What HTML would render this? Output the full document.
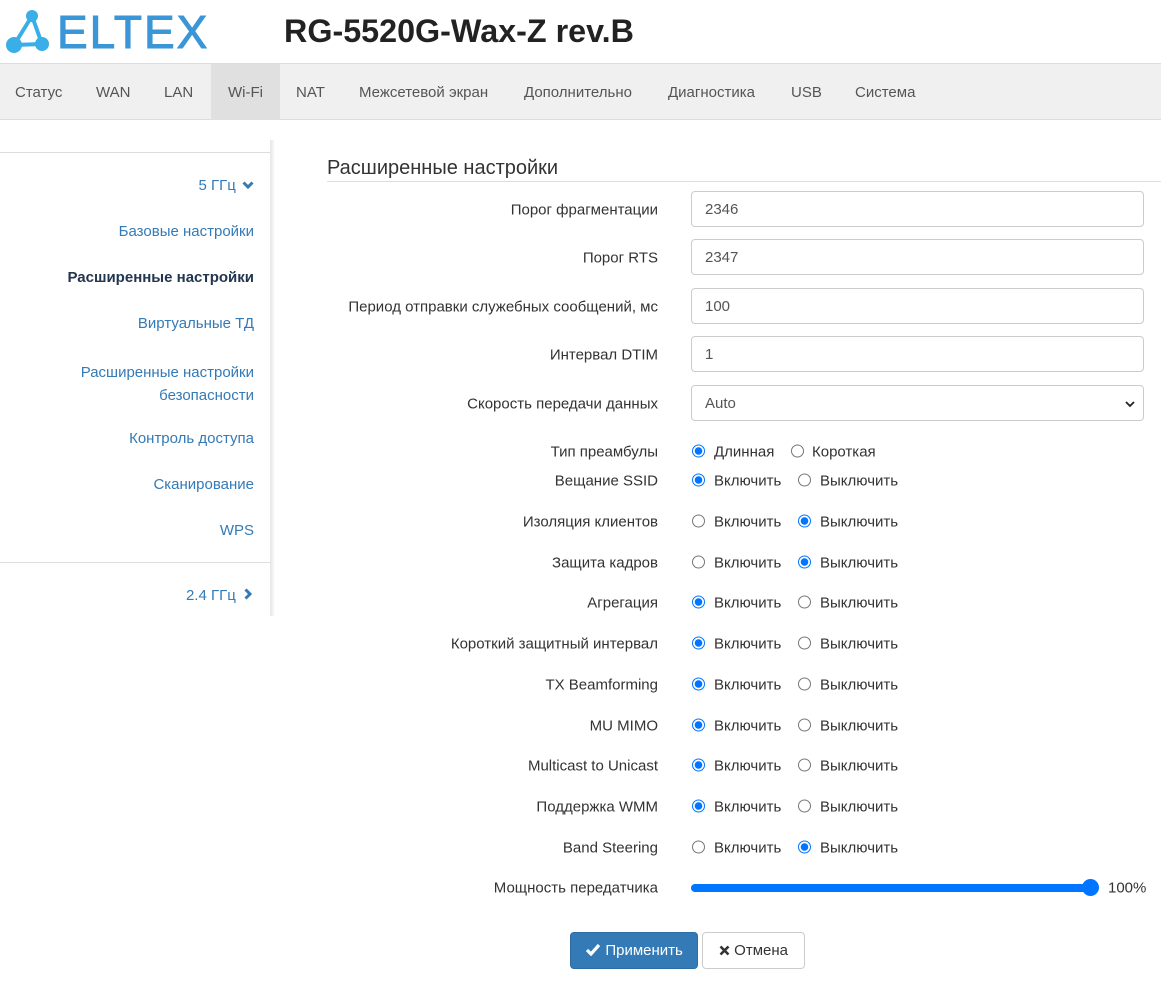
<!DOCTYPE html>
<html><head><meta charset="utf-8"><style>
*{box-sizing:border-box;margin:0;padding:0}
body{width:1161px;height:984px;background:#fff;font-family:"Liberation Sans",sans-serif;font-size:15px;color:#333;position:relative;overflow:hidden}
.a{position:absolute;white-space:nowrap}
.nav{position:absolute;left:0;top:63px;width:1161px;height:57px;background:#f0f0f0;border-top:1px solid #ddd;border-bottom:1px solid #ddd}
.nav span{position:absolute;top:1px;height:55px;line-height:55px;color:#555;font-size:15px}
.side{position:absolute;right:907px;color:#337ab7;font-size:15px;text-align:right}
.lbl{position:absolute;right:503px;font-size:15px;color:#333;white-space:nowrap;transform:translateY(-45%)}
.inp{position:absolute;left:691px;width:453px;height:36px;border:1px solid #ccc;border-radius:4px;padding-left:13px;line-height:36px;font-size:15px;color:#555}
.r{position:absolute;width:13px;height:13px;border-radius:50%;border:1px solid #767676;transform:translateY(-50%)}
.r.on{border:1px solid #0075ff;background:radial-gradient(circle,#0075ff 0 3.5px,#fff 4px)}
.rt{position:absolute;font-size:15px;color:#333;transform:translateY(-45%);white-space:nowrap}
</style></head><body>
<svg class="a" style="left:4px;top:8px" width="50" height="46" viewBox="0 0 50 46">
<g stroke="#3aaee6" stroke-width="4" fill="none"><line x1="28" y1="8" x2="10" y2="37"/><line x1="28" y1="8" x2="38" y2="36"/><line x1="10" y1="37" x2="38" y2="36"/></g>
<circle cx="28" cy="8" r="6" fill="#3aaee6"/><circle cx="10" cy="37" r="8" fill="#3aaee6"/><circle cx="38" cy="36" r="7" fill="#3aaee6"/><circle cx="24" cy="26" r="3" fill="#fff"/>
</svg>
<div class="a" style="left:57px;top:5px;font-size:46px;color:#3a96d6;letter-spacing:2px;-webkit-text-stroke:1px #3a96d6">ELTEX</div>
<div class="a" style="left:284px;top:13px;font-size:32.3px;font-weight:bold;color:#222">RG-5520G-Wax-Z rev.B</div>
<div class="nav">
<span style="left:15px">Статус</span><span style="left:96px">WAN</span><span style="left:164px">LAN</span>
<span style="left:211px;width:69px;background:#e0e0e0;text-align:center;top:0;height:56px;line-height:57px">Wi-Fi</span>
<span style="left:296px">NAT</span><span style="left:359px">Межсетевой экран</span><span style="left:524px">Дополнительно</span>
<span style="left:668px">Диагностика</span><span style="left:791px">USB</span><span style="left:855px">Система</span>
</div>
<div class="a" style="left:0;top:152px;width:271px;border-top:1px solid #ddd"></div>
<div class="a" style="left:270px;top:140px;width:4px;height:476px;background:linear-gradient(90deg,#e6e6e6,#f6f6f6)"></div>
<div class="a" style="left:0;top:562px;width:271px;border-top:1px solid #ddd"></div>
<div class="side" style="top:177px">5 ГГц <svg width="12" height="10" viewBox="0 0 12 10" style="margin-left:2px"><path d="M1.5 2.5l4.5 4.5 4.5-4.5" stroke="#337ab7" stroke-width="3" fill="none"/></svg></div>
<div class="side" style="top:223px">Базовые настройки</div>
<div class="side" style="top:269px;color:#23364f;font-weight:bold">Расширенные настройки</div>
<div class="side" style="top:315px">Виртуальные ТД</div>
<div class="side" style="top:361px;line-height:23px">Расширенные настройки<br>безопасности</div>
<div class="side" style="top:430px">Контроль доступа</div>
<div class="side" style="top:476px">Сканирование</div>
<div class="side" style="top:522px">WPS</div>
<div class="side" style="top:587px">2.4 ГГц <svg width="12" height="12" viewBox="0 0 12 12" style="margin-left:2px"><path d="M3.5 1.5l4.5 4.5-4.5 4.5" stroke="#337ab7" stroke-width="3" fill="none"/></svg></div>
<div class="a" style="left:327px;top:157px;font-size:20px;color:#333">Расширенные настройки</div>
<div class="a" style="left:327px;top:181px;width:834px;border-top:1px solid #ddd"></div>
<div class="lbl" style="top:209px">Порог фрагментации</div><div class="inp" style="top:191px">2346</div>
<div class="lbl" style="top:257px">Порог RTS</div><div class="inp" style="top:239px">2347</div>
<div class="lbl" style="top:306px">Период отправки служебных сообщений, мс</div><div class="inp" style="top:288px">100</div>
<div class="lbl" style="top:354px">Интервал DTIM</div><div class="inp" style="top:336px">1</div>
<div class="lbl" style="top:403px">Скорость передачи данных</div><div class="inp" style="top:385px">Auto<svg style="position:absolute;right:8px;top:14px" width="10" height="8" viewBox="0 0 10 8"><path d="M1 2l4 4 4-4" stroke="#222" stroke-width="1.8" fill="none"/></svg></div>
<div class="lbl" style="top:451px">Тип преамбулы</div>
<div class="r on" style="left:692px;top:451px"></div><div class="rt" style="left:714px;top:451px">Длинная</div>
<div class="r" style="left:791px;top:451px"></div><div class="rt" style="left:812px;top:451px">Короткая</div>
<div class="lbl" style="top:480px">Вещание SSID</div><div class="r on" style="left:692px;top:480px"></div><div class="rt" style="left:714px;top:480px">Включить</div><div class="r" style="left:798px;top:480px"></div><div class="rt" style="left:820px;top:480px">Выключить</div>
<div class="lbl" style="top:521px">Изоляция клиентов</div><div class="r" style="left:692px;top:521px"></div><div class="rt" style="left:714px;top:521px">Включить</div><div class="r on" style="left:798px;top:521px"></div><div class="rt" style="left:820px;top:521px">Выключить</div>
<div class="lbl" style="top:562px">Защита кадров</div><div class="r" style="left:692px;top:562px"></div><div class="rt" style="left:714px;top:562px">Включить</div><div class="r on" style="left:798px;top:562px"></div><div class="rt" style="left:820px;top:562px">Выключить</div>
<div class="lbl" style="top:602px">Агрегация</div><div class="r on" style="left:692px;top:602px"></div><div class="rt" style="left:714px;top:602px">Включить</div><div class="r" style="left:798px;top:602px"></div><div class="rt" style="left:820px;top:602px">Выключить</div>
<div class="lbl" style="top:643px">Короткий защитный интервал</div><div class="r on" style="left:692px;top:643px"></div><div class="rt" style="left:714px;top:643px">Включить</div><div class="r" style="left:798px;top:643px"></div><div class="rt" style="left:820px;top:643px">Выключить</div>
<div class="lbl" style="top:684px">TX Beamforming</div><div class="r on" style="left:692px;top:684px"></div><div class="rt" style="left:714px;top:684px">Включить</div><div class="r" style="left:798px;top:684px"></div><div class="rt" style="left:820px;top:684px">Выключить</div>
<div class="lbl" style="top:725px">MU MIMO</div><div class="r on" style="left:692px;top:725px"></div><div class="rt" style="left:714px;top:725px">Включить</div><div class="r" style="left:798px;top:725px"></div><div class="rt" style="left:820px;top:725px">Выключить</div>
<div class="lbl" style="top:765px">Multicast to Unicast</div><div class="r on" style="left:692px;top:765px"></div><div class="rt" style="left:714px;top:765px">Включить</div><div class="r" style="left:798px;top:765px"></div><div class="rt" style="left:820px;top:765px">Выключить</div>
<div class="lbl" style="top:806px">Поддержка WMM</div><div class="r on" style="left:692px;top:806px"></div><div class="rt" style="left:714px;top:806px">Включить</div><div class="r" style="left:798px;top:806px"></div><div class="rt" style="left:820px;top:806px">Выключить</div>
<div class="lbl" style="top:847px">Band Steering</div><div class="r" style="left:692px;top:847px"></div><div class="rt" style="left:714px;top:847px">Включить</div><div class="r on" style="left:798px;top:847px"></div><div class="rt" style="left:820px;top:847px">Выключить</div>
<div class="lbl" style="top:887px">Мощность передатчика</div>
<div class="a" style="left:691px;top:884px;width:399px;height:8px;border-radius:4px;background:#0075ff"></div>
<div class="a" style="left:1082px;top:879px;width:17px;height:17px;border-radius:50%;background:#0075ff"></div>
<div class="rt" style="left:1108px;top:887px">100%</div>
<div class="a" style="left:570px;top:932px;width:128px;height:37px;background:#337ab7;border:1px solid #2e6da4;border-radius:4px;color:#fff;line-height:36px;text-align:center;font-size:15px"><svg width="16" height="13" viewBox="0 0 16 13" style="vertical-align:-1px"><path d="M2 7l4 4 8-9" stroke="#fff" stroke-width="3.2" fill="none"/></svg> Применить</div>
<div class="a" style="left:702px;top:932px;width:103px;height:37px;background:#fff;border:1px solid #ccc;border-radius:4px;color:#333;line-height:36px;text-align:center;font-size:15px"><svg width="11" height="11" viewBox="0 0 11 11" style="vertical-align:-1px"><path d="M1.5 1.5l8 8M9.5 1.5l-8 8" stroke="#333" stroke-width="2.6" fill="none"/></svg> Отмена</div>
</body></html>
